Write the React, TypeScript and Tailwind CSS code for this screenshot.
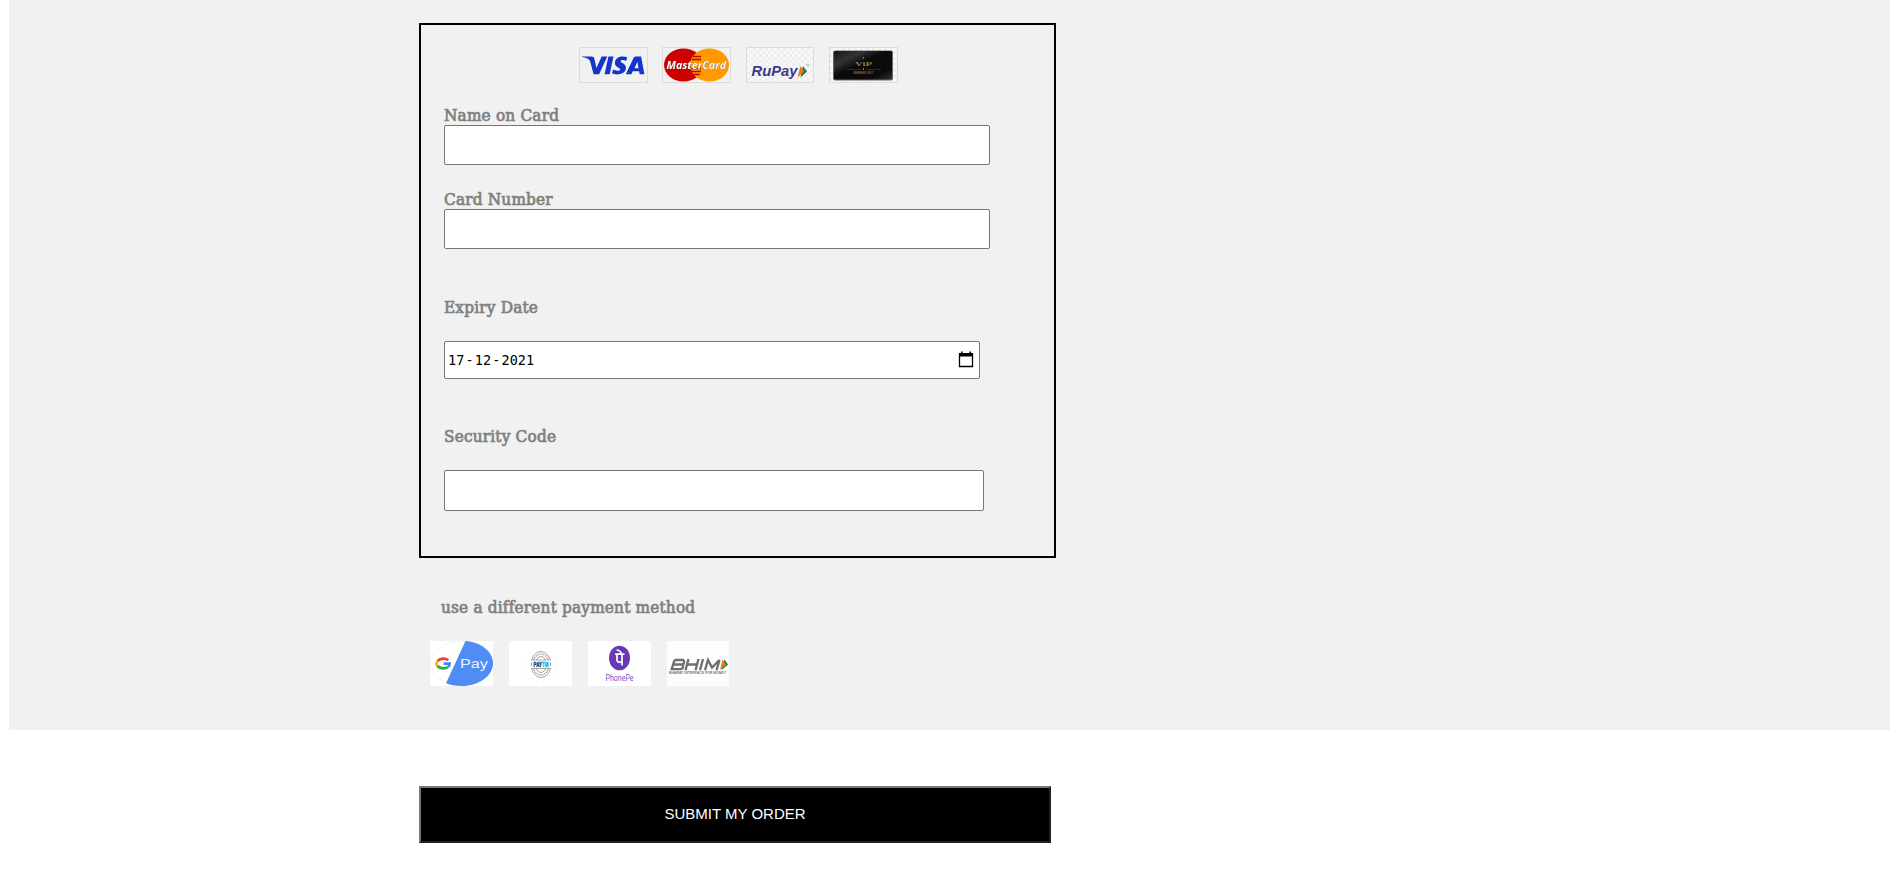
import React from "react";

const sans = "'Liberation Sans', Arial, sans-serif";
const italic = "'Open Sans', 'Noto Sans', sans-serif";

function Visa() {
  return (
    <svg className="h-full w-full" viewBox="0 0 67 34">
      <g fill="#1434cb">
        <path d="M2 8.500h9.500c1.700 0 2.600.7 2.900 2.200l2 9.300L21.700 8.500h5.600l-8.200 17.800h-5.500L10 12.700C8.500 10.700 5.500 9.500 2 9z" />
        <path d="M28.400 8.500h5.100l-3.800 17.800h-5.100z" />
        <path d="M47.200 9.200l-1 3.700c-2.500-1-5.400-1.200-5.600.4-.2 1.700 6 2.200 5.300 7.200-.8 5.700-7.900 7-13.900 5.100l1-4c3 1.400 7 1.600 7.200-.2.200-2-6-2-5.300-7.200.7-5.300 7-7 12.300-5z" />
        <path fillRule="evenodd" d="M56 8.500h5.100l3.300 17.800h-4.700l-.6-3h-6.400l-1.300 3h-5.600l7.600-16.100c.6-1.200 1.300-1.700 2.600-1.700zm1.400 5.300l-2.900 6.400h4z" />
      </g>
    </svg>
  );
}

function MasterCard() {
  return (
    <svg className="h-full w-full" viewBox="0 0 67 34">
      <ellipse cx="20.500" cy="17" rx="19.500" ry="16.500" fill="#cc0000" />
      <ellipse cx="46.500" cy="17" rx="19.500" ry="16.500" fill="#ff9900" />
      <path d="M30 8.500h8M29 11.500h9M28 23.500h10M29 26.500h8M28 20.500h10" stroke="#cc0000" strokeWidth="1.300" />
      <text x="3.500" y="20.500" className="[filter:drop-shadow(0.6px_0.9px_0.3px_#333)]" textLength="59.500" lengthAdjust="spacingAndGlyphs" fontFamily={italic} fontSize="11" fontWeight="700" fontStyle="italic" fill="#fff">MasterCard</text>
    </svg>
  );
}

function RuPay() {
  return (
    <svg className="h-full w-full" viewBox="0 0 66 34">
      <defs>
        <pattern id="checks" width="6" height="6" patternUnits="userSpaceOnUse">
          <path d="M0 0h6v6H0z" fill="#f9f9f9" />
          <path d="M0 0h3v3H0zM3 3h3v3H3z" fill="#eeeeee" />
        </pattern>
      </defs>
      <path d="M0 0h66v34H0z" fill="url(#checks)" />
      <text x="4.500" y="28" textLength="46" lengthAdjust="spacingAndGlyphs" fontFamily={sans} fontSize="15.500" fontWeight="700" fontStyle="italic" fill="#3a3a8c">RuPay</text>
      <path d="M56 18l4 5.500-6.500 6z" fill="#148040" />
      <path d="M53.500 18l3.500 5.500-6.500 6z" fill="#f37021" />
      <circle cx="61" cy="17" r="1" fill="none" stroke="#999" strokeWidth=".6" />
    </svg>
  );
}

function Vip() {
  return (
    <svg className="h-full w-full" viewBox="0 0 67 34">
      <defs>
        <linearGradient id="sheen" x1="0" y1="0" x2="1" y2="1">
          <stop offset="0" stopColor="#151515" />
          <stop offset=".25" stopColor="#343434" />
          <stop offset=".45" stopColor="#0b0b0b" />
          <stop offset=".8" stopColor="#0b0b0b" />
          <stop offset="1" stopColor="#333" />
        </linearGradient>
        <filter id="shade"><feGaussianBlur stdDeviation=".7" /></filter>
      </defs>
      <path d="M0 0h67v34H0z" fill="url(#checks)" />
      <rect x="3" y="2.500" width="60" height="30" rx="2" fill="#666" filter="url(#shade)" />
      <rect x="4" y="3" width="58" height="28.500" rx="1.500" fill="url(#sheen)" />
      <text x="25" y="17.500" textLength="17" lengthAdjust="spacingAndGlyphs" fontFamily="'Liberation Serif', serif" fontSize="7" fontWeight="700" fill="#917a42">ViP</text>
      <path d="M33.500 9v2M33.500 20v2" stroke="#917a42" strokeWidth="1" />
      <path d="M17 21.500h14M36 21.500h15" stroke="#41351c" strokeWidth=".7" />
      <text x="23.500" y="26.200" textLength="20" lengthAdjust="spacingAndGlyphs" fontFamily={sans} fontSize="2.600" fill="#b3924b">MEMBERS ONLY</text>
    </svg>
  );
}

function GPay() {
  return (
    <svg className="h-full w-full" viewBox="0 0 63 45">
      <ellipse cx="31.500" cy="22.500" rx="31" ry="22.200" fill="#fff" stroke="#f1f1f1" strokeWidth=".7" />
      <path d="M35.500 0C51 1 63 10.500 63 22.500S49 45 31.500 45c-6 0-11-1-15.500-2.700z" fill="#4f8df5" />
      <g fill="none" strokeWidth="2.700">
        <path d="M18.300 19.300c-2.700-2.500-8-2.300-10.800.8" stroke="#ea4335" />
        <path d="M7.500 20c-1.300 1.700-1.300 3.700 0 5.300" stroke="#fbbc05" />
        <path d="M7.500 25c2.600 3 8 3 10.500 1" stroke="#34a853" />
        <path d="M18 26c1.200-1 1.600-2 1.600-3.300h-6" stroke="#4285f4" />
      </g>
      <text x="30" y="27" textLength="28" lengthAdjust="spacingAndGlyphs" fontFamily={sans} fontSize="13" fill="#e9f1fe">Pay</text>
    </svg>
  );
}

function Paytm() {
  return (
    <svg className="h-full w-full bg-white" viewBox="0 0 63 45">
      <ellipse cx="32" cy="23.500" rx="16" ry="17.500" fill="none" stroke="#e2e2e2" strokeWidth="1" strokeDasharray="1 5" />
      <g fill="none" stroke="#8b8b8b" strokeWidth=".8">
        <ellipse cx="32" cy="23.500" rx="10" ry="13" />
        <ellipse cx="32" cy="23.500" rx="8" ry="10.500" strokeDasharray="1 1" strokeWidth="1.400" />
        <ellipse cx="32" cy="23.500" rx="5.500" ry="8" />
      </g>
      <path d="M21 19h22v8.500H21z" fill="#fff" />
      <path d="M22 19h20M22 27.500h20" stroke="#888" strokeWidth=".7" />
      <path d="M22.500 21.500v3.500M41.500 21.500v3.500" stroke="#999" />
      <text x="24.500" y="25.700" textLength="15" lengthAdjust="spacingAndGlyphs" fontFamily={sans} fontWeight="700" fontSize="6.500" strokeWidth=".4">
        <tspan fill="#12447f" stroke="#12447f">PAY</tspan><tspan fill="#16b4ee" stroke="#16b4ee">TM</tspan>
      </text>
    </svg>
  );
}

function PhonePe() {
  return (
    <svg className="h-full w-full bg-white" viewBox="0 0 63 45">
      <ellipse cx="31.500" cy="17" rx="10.500" ry="12.300" fill="#6739b7" />
      <path d="M27 13.200h9.500M29 13.500v5.500c0 2 2 2.500 4.800 2M34 13v11.500M28.500 9c2.500 0 4 1.200 5 4" fill="none" stroke="#fff" strokeWidth="1.700" />
      <text x="17.500" y="39.700" textLength="28" lengthAdjust="spacingAndGlyphs" fontFamily="Roboto, sans-serif" fontSize="8.500" fill="#7a52c0">PhonePe</text>
    </svg>
  );
}

function Bhim() {
  return (
    <svg className="h-full w-full bg-[#fdfdfd]" viewBox="0 0 62 45">
      <g fill="none" stroke="#6d6e71" strokeWidth="2.300">
        <path d="M7.500 19h8.200c2.200 0 1.800 4.500-1 4.500H6.500m8.200 0c2.500 0 1.500 4.700-1.200 4.700H4.700L7.500 19" />
        <path d="M21.500 18l-3 11.300M31.500 18l-3 11.300M20.500 23.500H30M36 18l-3 11.300M38 29.300L41 19l4 7.500 7.500-7.500-3 10.300" />
      </g>
      <path d="M57.500 18.500L61 23.500 54.500 29z" fill="#148040" />
      <path d="M55.500 18.500L59 23.500 53 29z" fill="#f37021" />
      <text x="2" y="32.600" textLength="57" lengthAdjust="spacingAndGlyphs" fontFamily={sans} fontWeight="700" fontSize="2.700" fill="#777">BHARAT INTERFACE FOR MONEY</text>
    </svg>
  );
}

const label =
  "block h-6 whitespace-nowrap font-['DejaVu_Serif_Condensed','DejaVu_Serif',serif] [font-stretch:condensed] text-[17px] leading-6 tracking-[0.2px] text-[#808080] [-webkit-text-stroke:0.7px_#808080]";
const field = "block rounded-[2px] border border-[#767676] bg-white";
const card = "h-9 border border-[#dcdcdc]";

export default function App() {
  return (
    <div className="h-[877px] overflow-hidden bg-white">
      <section className="mr-[6px] ml-[9px] h-[730px] bg-[#f1f1f1] pt-[23px] pl-[410px]">
        <form className="h-[535px] w-[637px] border-2 border-black pl-[23px]">
          <div className="flex pt-[22px] pl-[135px]">
            <div className={`${card} w-[69px]`}><Visa /></div>
            <div className={`${card} ml-[14px] w-[69px]`}><MasterCard /></div>
            <div className={`${card} ml-[15px] w-[68px]`}><RuPay /></div>
            <div className={`${card} ml-[15px] w-[69px]`}><Vip /></div>
          </div>
          <label htmlFor="name" className={`${label} mt-[20px]`}>Name on Card</label>
          <input id="name" className={`${field} -mt-[2px] h-10 w-[546px]`} />
          <label htmlFor="number" className={`${label} mt-[22px]`}>Card Number</label>
          <input id="number" className={`${field} -mt-[2px] h-10 w-[546px]`} />
          <label htmlFor="expiry" className={`${label} mt-[46px]`}>Expiry Date</label>
          <div id="expiry" className={`${field} mt-[22px] flex! h-[38px] w-[536px] items-center justify-between pr-[5px] pl-[3px]`}>
            <div className="flex gap-px font-['DejaVu_Sans_Mono',monospace] text-[13.500px] leading-4 tracking-[0.1px] text-black">
              <span>17</span><span>-</span><span>12</span><span>-</span><span>2021</span>
            </div>
            <svg className="-mt-px h-[17px] w-4" viewBox="0 0 16 17">
              <path d="M1.500 3h13v12.500h-13z" fill="none" stroke="#000" strokeWidth="1.300" />
              <path d="M1 2h14v3.500H1zM3 .5h1.600V3H3zM11.400.5H13V3h-1.600z" fill="#000" />
            </svg>
          </div>
          <label htmlFor="code" className={`${label} mt-[45px]`}>Security Code</label>
          <input id="code" className={`${field} mt-[22px] h-[41px] w-[540px]`} />
        </form>
        <p className={`${label} mt-[37px] ml-[22px]`}>use a different payment method</p>
        <div className="mt-[22px] ml-[11px] flex gap-4">
          <div className="h-[45px] w-[63px] bg-white"><GPay /></div>
          <div className="h-[45px] w-[63px]"><Paytm /></div>
          <div className="h-[45px] w-[63px]"><PhonePe /></div>
          <div className="h-[45px] w-[62px]"><Bhim /></div>
        </div>
      </section>
      <button className="mt-[56px] ml-[419px] block h-[57px] w-[632px] border-2 border-t-[#767676] border-r-[#212121] border-b-[#212121] border-l-[#767676] bg-black font-['Liberation_Sans',Arial,sans-serif] text-[15px] text-white">
        SUBMIT MY ORDER
      </button>
    </div>
  );
}
